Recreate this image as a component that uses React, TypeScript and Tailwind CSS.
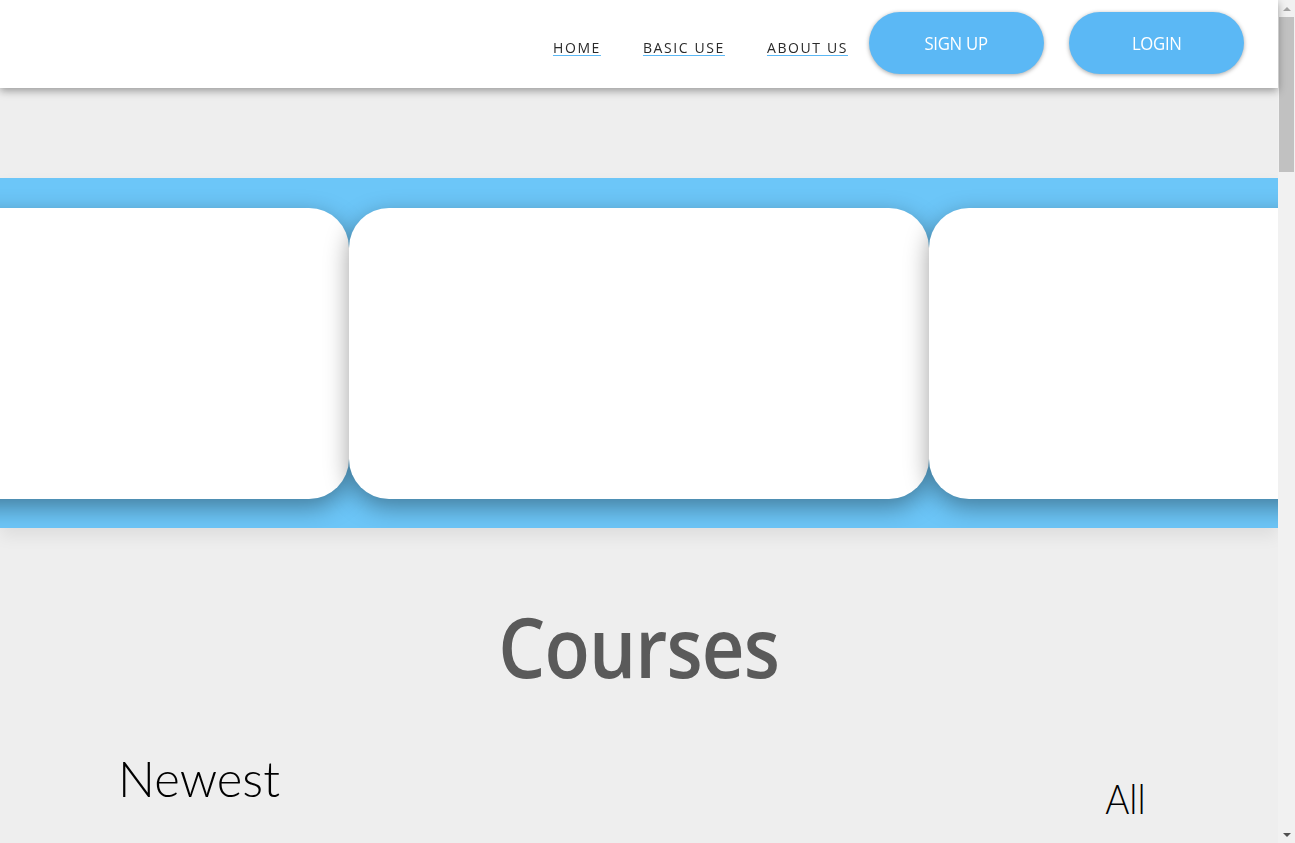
export default function App() {
  const navLinks = ['HOME', 'BASIC USE', 'ABOUT US'];

  return (
    <div className="min-h-[4400px] bg-[#eeeeee]" style={{ fontFamily: '"Open Sans", "Liberation Sans", sans-serif' }}>
      <div className="mr-[17px]">
        {/* Navbar */}
        <header className="relative z-20 flex h-[88px] items-center justify-end bg-white pr-[34px] shadow-[0_3px_8px_rgba(0,0,0,0.35)]">
          <nav className="mt-[6px] flex items-center gap-[42px]">
            {navLinks.map((link) => (
              <a
                key={link}
                href="#"
                className="text-[14px] tracking-[1.6px] text-[#2a2a2a] underline decoration-[#5bb8f5] decoration-1 underline-offset-[2px]"
              >
                {link}
              </a>
            ))}
          </nav>
          <div className="-mt-[2px] ml-[21px] flex gap-[25px]">
            <button className="h-[62px] w-[175px] rounded-full bg-[#5bb8f5] text-white shadow-[0_1px_4px_rgba(0,0,0,0.35)]">
              <span className="inline-block scale-x-[0.93] text-[18px] font-medium tracking-[-0.3px]">SIGN UP</span>
            </button>
            <button className="h-[62px] w-[175px] rounded-full bg-[#5bb8f5] text-white shadow-[0_1px_4px_rgba(0,0,0,0.35)]">
              <span className="inline-block scale-x-[0.93] text-[18px] font-medium tracking-[-0.3px]">LOGIN</span>
            </button>
          </div>
        </header>

        {/* Carousel band */}
        <section className="mt-[90px] flex h-[350px] items-center justify-center overflow-hidden bg-[#6cc6f8] shadow-[0_8px_16px_rgba(0,0,0,0.07)]">
          {[0, 1, 2].map((i) => (
            <div
              key={i}
              className="h-[291px] w-[580px] shrink-0 rounded-[40px] bg-white shadow-[0_8px_24px_rgba(0,0,0,0.38)]"
            />
          ))}
        </section>

        {/* Courses */}
        <section className="pt-[68px]">
          <div className="flex justify-center">
            <h1 className="inline-block scale-x-[0.885] text-[84px] font-semibold leading-[100px] tracking-[-1px] text-[#5a5a5a]">
              Courses
            </h1>
          </div>
          <div className="mt-[52px] flex items-start justify-between pl-[118px] pr-[130px]">
            <h2 className="text-[49px] font-light leading-[60px] text-black" style={{ fontFamily: 'Lato, sans-serif' }}>
              Newest
            </h2>
            <div className="mt-[26px] scale-x-[0.9] text-[41px] font-light leading-[50px] text-black" style={{ fontFamily: 'Lato, sans-serif' }}>
              All
            </div>
          </div>
        </section>
      </div>

      {/* Browser scrollbar */}
      <div className="fixed right-0 top-0 flex h-full w-[17px] flex-col items-center bg-[#f1f1f1]">
        <div className="flex h-[17px] w-full items-center justify-center">
          <div className="h-0 w-0 border-x-[4px] border-b-[4px] border-x-transparent border-b-[#a3a3a3]" />
        </div>
        <div className="h-[155px] w-[15px] bg-[#c1c1c1]" />
        <div className="flex-1" />
        <div className="flex h-[17px] w-full items-center justify-center">
          <div className="h-0 w-0 border-x-[4px] border-t-[4px] border-x-transparent border-t-[#505050]" />
        </div>
      </div>
    </div>
  );
}
